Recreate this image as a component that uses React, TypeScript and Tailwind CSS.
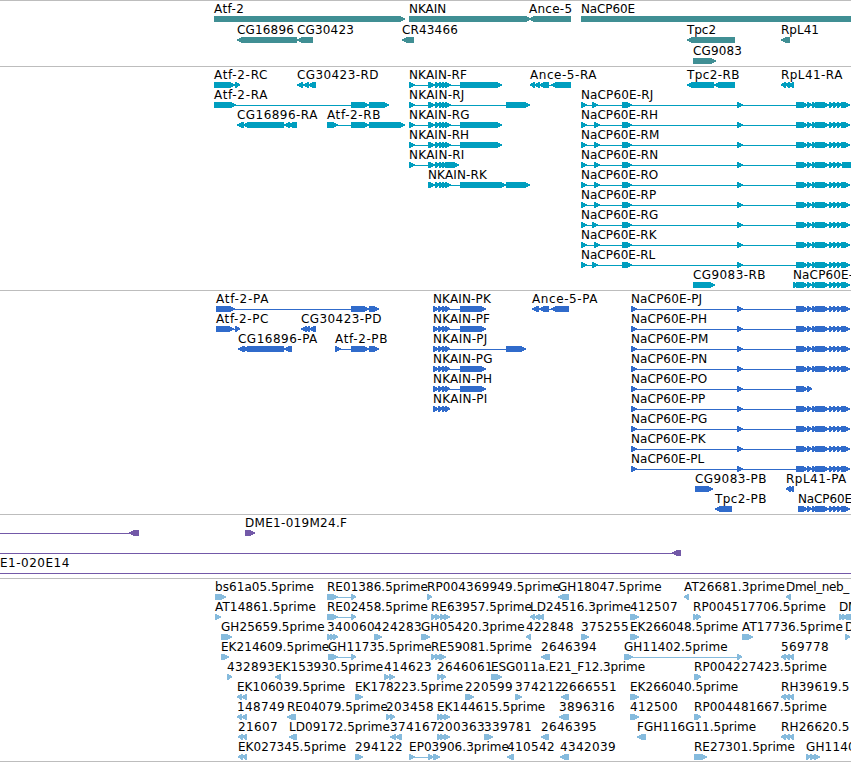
import React from 'react';

type Strand = '+' | '-';
type Block = [number, number];

interface Feature {
  label?: string;
  x: number;
  strand: Strand;
  blocks: Block[];
  // extends the connector past the blocks, for features cut by the view
  from?: number;
  to?: number;
}

interface TrackData {
  name: string;
  color: string;
  rowClass: string;
  className: string;
  rows: Feature[][];
}

const VIEW_WIDTH = 851;
const FONT = '12px "DejaVu Sans"';

const f = (label: string, strand: Strand, ...blocks: Block[]): Feature => ({
  label,
  x: blocks[0][0],
  strand,
  blocks,
});

// Exon groups shared by several isoforms
const nkainSmall: Block[] = [[428, 435], [435, 440], [439, 444], [442, 447], [445, 451]];
const nkainCds: Block[] = [[433, 439], [438, 443], [442, 446], [445, 450]];
const tail: Block[] = [[807, 812], [812, 817], [815, 829], [829, 834], [833, 838], [837, 842], [841, 846], [843, 850]];

const nkain = (label: string, ...rest: Block[]) => f(label, '+', [409, 415], ...nkainSmall, ...rest);
const nkainP = (label: string, ...rest: Block[]) => f(label, '+', ...nkainCds, ...rest);

const nacpR = (iso: string, second: number): Feature => ({
  ...f(`NaCP60E-${iso}`, '+', [581, 587], [second, second + 6], [622, 632], [737, 743], [796, 808], ...tail),
  to: 851,
});
const nacpP = (iso: string): Feature => ({
  ...f(`NaCP60E-${iso}`, '+', [631, 637], [737, 743], [796, 808], ...tail),
  to: 851,
});
const nacpRN: Feature = f('NaCP60E-RN', '+', [581, 587], [594, 600], [622, 632], [737, 743], [796, 808], ...tail.slice(0, 6), [842, 860]);

const tracks: TrackData[] = [
  {
    name: 'genes',
    color: '#408f94',
    rowClass: 'h-[21px]',
    className: 'pb-0.5',
    rows: [
      [f('Atf-2', '+', [214, 405]), f('NKAIN', '+', [409, 531]), f('Ance-5', '-', [529, 571]), f('NaCP60E', '+', [581, 880])],
      [
        f('CG16896', '-', [237, 297]),
        f('CG30423', '-', [297, 313]),
        f('CR43466', '-', [402, 414]),
        f('Tpc2', '-', [687, 735]),
        f('RpL41', '-', [781, 790]),
      ],
      [f('CG9083', '+', [693, 716])],
    ],
  },
  {
    name: 'transcripts',
    color: '#009ebf',
    rowClass: 'h-5',
    className: 'pb-[3px]',
    rows: [
      [
        f('Atf-2-RC', '+', [214, 235], [235, 240]),
        f('CG30423-RD', '-', [297, 303], [303, 309], [308, 316]),
        nkain('NKAIN-RF', [460, 502]),
        f('Ance-5-RA', '-', [530, 535], [534, 540], [539, 549], [551, 571]),
        f('Tpc2-RB', '-', [687, 714], [714, 735]),
        f('RpL41-RA', '-', [781, 786], [785, 790], [788, 794]),
      ],
      [
        f('Atf-2-RA', '+', [214, 236], [351, 369], [369, 389]),
        nkain('NKAIN-RJ', [506, 530]),
        nacpR('RJ', 592),
      ],
      [
        f('CG16896-RA', '-', [237, 244], [243, 284], [284, 290], [288, 297]),
        f('Atf-2-RB', '+', [327, 338], [351, 369], [369, 405]),
        nkain('NKAIN-RG', [460, 502]),
        nacpR('RH', 594),
      ],
      [nkain('NKAIN-RH', [460, 502]), nacpR('RM', 594)],
      [nkain('NKAIN-RI', [445, 459]), nacpRN],
      [f('NKAIN-RK', '+', ...nkainSmall, [460, 506], [506, 530]), nacpR('RO', 594)],
      [nacpR('RP', 594)],
      [nacpR('RG', 592)],
      [nacpR('RK', 594)],
      [nacpR('RL', 592)],
      [f('CG9083-RB', '+', [693, 715]), { ...f('NaCP60E-', '+', [793, 799], [796, 808], ...tail), to: 851 }],
    ],
  },
  {
    name: 'proteins',
    color: '#306bcb',
    rowClass: 'h-5',
    className: 'pb-[3px]',
    rows: [
      [
        f('Atf-2-PA', '+', [216, 235], [351, 369], [369, 379]),
        nkainP('NKAIN-PK', [460, 486]),
        f('Ance-5-PA', '-', [532, 539], [539, 549], [551, 569]),
        nacpP('PJ'),
      ],
      [
        f('Atf-2-PC', '+', [216, 234], [235, 240]),
        f('CG30423-PD', '-', [301, 307], [305, 310], [309, 316]),
        nkainP('NKAIN-PF', [460, 486]),
        nacpP('PH'),
      ],
      [
        f('CG16896-PA', '-', [238, 245], [243, 284], [284, 290], [288, 292]),
        f('Atf-2-PB', '+', [335, 341], [351, 369], [369, 379]),
        nkainP('NKAIN-PJ', [506, 526]),
        nacpP('PM'),
      ],
      [nkainP('NKAIN-PG', [460, 486]), { ...nacpP('PN'), to: undefined }],
      [nkainP('NKAIN-PH', [460, 486]), f('NaCP60E-PO', '+', [631, 637], [737, 743], [796, 808], [807, 812])],
      [nkainP('NKAIN-PI'), nacpP('PP')],
      [nacpP('PG')],
      [nacpP('PK')],
      [nacpP('PL')],
      [f('CG9083-PB', '+', [695, 713]), f('RpL41-PA', '-', [786, 791], [789, 794])],
      [f('Tpc2-PB', '-', [715, 732]), { ...f('NaCP60E', '+', [798, 808], ...tail), to: 851 }],
    ],
  },
  {
    name: 'bacs',
    color: '#7359a8',
    rowClass: 'h-5',
    className: 'pb-[3px]',
    rows: [
      [{ x: 0, strand: '-', blocks: [[129, 139]], from: 0 }, f('DME1-019M24.F', '+', [245, 255])],
      [{ x: 0, strand: '-', blocks: [[672, 681]], from: 0 }],
      [{ label: 'E1-020E14', x: 0, strand: '+', blocks: [], from: 0, to: 851 }],
    ],
  },
  {
    name: 'ests',
    color: '#86bbdd',
    rowClass: 'h-5',
    className: 'border-b pb-0.5',
    rows: [
      [
        f('bs61a05.5prime', '+', [215, 226]),
        f('RE01386.5prime', '+', [327, 338], [351, 356]),
        f('RP004369949.5prime', '+', [427, 432]),
        f('GH18047.5prime', '-', [558, 569]),
        f('AT26681.3prime', '-', [684, 689]),
        f('Dmel_neb_', '-', [786, 791]),
      ],
      [
        f('AT14861.5prime', '+', [215, 221]),
        f('RE02458.5prime', '+', [327, 338], [351, 356]),
        f('RE63957.5prime', '+', [431, 436], [435, 441], [440, 446], [444, 450]),
        f('LD24516.3prime', '-', [530, 535], [534, 540], [538, 544]),
        f('412507', '+', [630, 639]),
        f('RP004517706.5prime', '+', [693, 698], [696, 701]),
        f('DM', '+', [839, 844], [842, 848], [846, 856]),
      ],
      [
        f('GH25659.5prime', '+', [221, 232]),
        f('340060', '+', [327, 331], [330, 334], [333, 338]),
        f('424283', '+', [374, 382]),
        f('GH05420.3prime', '+', [421, 430]),
        f('422848', '-', [526, 531]),
        f('375255', '+', [581, 589]),
        f('EK266048.5prime', '+', [630, 639]),
        f('AT17736.5prime', '+', [742, 753]),
        f('D', '+', [845, 850]),
      ],
      [
        f('EK214609.5prime', '+', [221, 229]),
        f('GH11735.5prime', '+', [328, 338], [351, 356]),
        f('RE59081.5prime', '+', [431, 436], [435, 441], [439, 446]),
        f('2646394', '-', [541, 550]),
        f('GH11402.5prime', '+', [624, 633], [737, 742]),
        f('569778', '-', [781, 786], [785, 790], [789, 794]),
      ],
      [
        f('432893', '+', [227, 232]),
        f('EK153930.5prime', '-', [275, 281]),
        f('414623', '+', [384, 390], [389, 395]),
        f('2646061', '+', [437, 442], [441, 446]),
        f('ESG011a.E21_F12.3prime', '+', [491, 502]),
        f('RP004227423.5prime', '+', [694, 698], [696, 701]),
      ],
      [
        f('EK106039.5prime', '-', [237, 242], [241, 247]),
        f('EK178223.5prime', '+', [355, 363]),
        f('220599', '+', [465, 474]),
        f('374212', '+', [515, 522]),
        f('2666551', '-', [561, 569]),
        f('EK266040.5prime', '+', [630, 639]),
        f('RH39619.5', '-', [781, 786], [785, 790], [789, 794]),
      ],
      [
        f('148749', '-', [237, 242], [241, 247]),
        f('RE04079.5prime', '-', [287, 296]),
        f('203458', '+', [386, 391], [390, 395]),
        f('EK144615.5prime', '+', [437, 442], [440, 446], [444, 450]),
        f('3896316', '-', [559, 569]),
        f('412500', '+', [630, 639]),
        f('RP004481667.5prime', '+', [694, 698], [696, 701]),
      ],
      [
        f('21607', '-', [238, 243], [242, 247]),
        f('LD09172.5prime', '-', [289, 297]),
        f('374167', '-', [390, 396], [395, 402]),
        f('200363', '+', [437, 442], [440, 446], [444, 450]),
        f('339781', '+', [484, 493]),
        f('2646395', '-', [541, 549]),
        f('FGH116G11.5prime', '-', [637, 646]),
        f('RH26620.5', '-', [781, 786], [785, 790], [789, 794]),
      ],
      [
        f('EK027345.5prime', '-', [238, 243], [242, 247]),
        f('294122', '+', [355, 363]),
        f('EP03906.3prime', '+', [409, 415], [428, 434], [433, 440]),
        f('410542', '-', [507, 514]),
        f('4342039', '-', [560, 569]),
        f('RE27301.5prime', '+', [694, 707]),
        f('GH1140', '+', [806, 811], [810, 816], [814, 820]),
      ],
    ],
  },
];

const ADVANCE: Record<string, number> = {
  A: 8, C: 8, D: 9, E: 7, F: 6.5, G: 9, H: 8.7, I: 4, J: 4, K: 7.3, L: 6, M: 10, N: 9, O: 9, P: 7, R: 8, S: 6.5, T: 7,
  a: 7, b: 8, c: 6, e: 7, f: 4, i: 3, l: 3, m: 11, n: 8, p: 8, r: 5, s: 6, t: 4, '.': 4, '-': 6.3, _: 5,
};

const ctx = document.createElement('canvas').getContext('2d');

const letterSpacing = (text: string) => {
  if (!ctx) return 0;
  ctx.font = FONT;
  // a dash right after a digit sits a little further away
  const dashes = (text.match(/\d-/g) || []).length * 1.5;
  const wanted = [...text].reduce((sum, ch) => sum + (ADVANCE[ch] ?? 8), dashes);
  return (wanted - ctx.measureText(text).width) / text.length;
};

const arrow = ([a, b]: Block, strand: Strand) => {
  const head = Math.min(6, b - a);
  return strand === '+'
    ? `M${a} 0H${b - head + 1}L${b} 2.4V3.6L${b - head + 1} 6H${a}Z`
    : `M${b} 0H${a + head - 1}L${a} 2.4V3.6L${a + head - 1} 6H${b}Z`;
};

const Glyph: React.FC<{ feature: Feature }> = ({ feature }) => {
  const { blocks, strand } = feature;
  const from = feature.from ?? blocks[0][0];
  const to = feature.to ?? blocks[blocks.length - 1][1];
  const hasLine = blocks.length !== 1 || feature.from !== undefined;
  return (
    <g>
      {hasLine && <rect x={from} y={3} width={to - from - (blocks.length ? 1 : 0)} height={1} />}
      {blocks.map((block, i) => (
        <path key={i} d={arrow(block, strand)} />
      ))}
    </g>
  );
};

const Row: React.FC<{ features: Feature[]; color: string; rowClass: string }> = ({ features, color, rowClass }) => (
  <div className={`relative ${rowClass}`}>
    <div className="h-[15px]">
      {features.map((feature, i) =>
        feature.label ? (
          <span
            key={i}
            className="absolute top-0 whitespace-pre leading-[16px]"
            style={{ left: feature.x, letterSpacing: letterSpacing(feature.label) }}
          >
            {feature.label}
          </span>
        ) : null
      )}
    </div>
    <svg className="block" width={VIEW_WIDTH} height={6} fill={color} shapeRendering="crispEdges">
      {features.map((feature, i) => (
        <Glyph key={i} feature={feature} />
      ))}
    </svg>
  </div>
);

const App: React.FC = () => {
  return (
    <div className="w-[851px] h-[762px] overflow-hidden bg-white text-black text-[12px] font-['DejaVu_Sans',sans-serif]">
      {tracks.map((track) => (
        <section key={track.name} className={`border-t border-[#bdbdbd] ${track.className}`}>
          {track.rows.map((row, i) => (
            <Row key={i} features={row} color={track.color} rowClass={track.rowClass} />
          ))}
        </section>
      ))}
    </div>
  );
};

export default App;
